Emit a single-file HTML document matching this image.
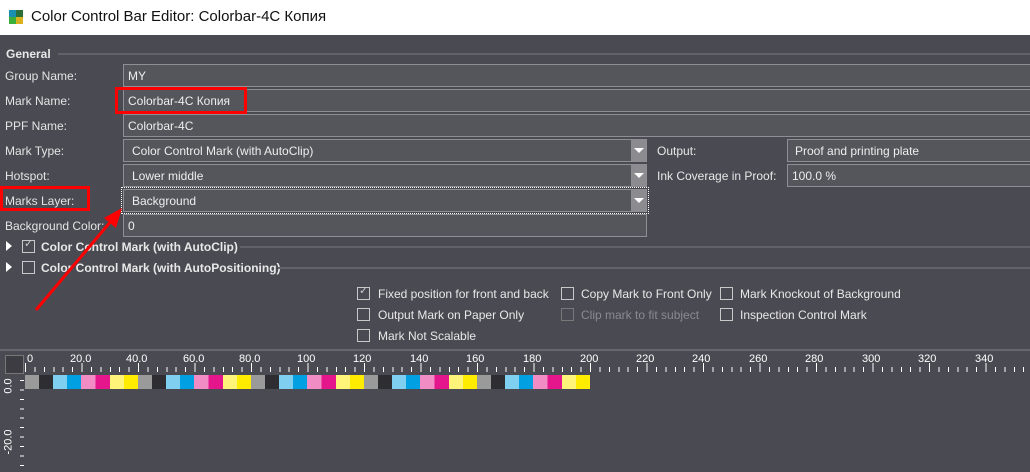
<!DOCTYPE html>
<html><head><meta charset="utf-8"><style>
*{margin:0;padding:0;box-sizing:border-box}
body{width:1030px;height:472px;overflow:hidden;background:#4a4a52;font-family:"Liberation Sans",Arial,sans-serif;font-size:12px;color:#e8e8e8;position:relative}
.a{position:absolute;white-space:nowrap}
.title{left:0;top:0;width:1030px;height:35px;background:#fff;color:#111;font-size:15px}
.f{position:absolute;height:23px;background:#55555c;border:1px solid #8e8e94;padding:4px 0 0 4px;color:#eee}
.dd{position:absolute;right:0;top:0;width:15px;height:21px;background:#8b8b90}
.dd:after{content:"";position:absolute;left:3px;top:8px;border-left:5px solid transparent;border-right:5px solid transparent;border-top:5px solid #fff}
.lbl{position:absolute;left:5px;color:#e4e4e4}
.cb{position:absolute;width:13px;height:13px;border:1px solid #c8c8c8}
.line{position:absolute;height:2px;background:#62626a}
.red{position:absolute;border:3px solid #f00}
</style></head><body>
<div class="a title">
 <svg class="a" style="left:8px;top:9px" width="16" height="16"><rect x="1" y="1" width="7" height="7" fill="#1a8fb0"/><rect x="8" y="1" width="7" height="7" fill="#2a6e3a"/><rect x="1" y="8" width="7" height="7" fill="#3cae3c"/><rect x="8" y="8" width="7" height="7" fill="#d8b020"/></svg>
 <span class="a" style="left:31px;top:8px">Color Control Bar Editor: Colorbar-4C Копия</span>
</div>
<span class="a" style="left:6px;top:47px;font-weight:bold">General</span>
<div class="line" style="left:58px;top:53px;width:972px"></div>
<span class="lbl" style="top:69px">Group Name:</span>
<div class="f" style="left:123px;top:64px;width:920px">MY</div>
<span class="lbl" style="top:94px">Mark Name:</span>
<div class="f" style="left:123px;top:89px;width:920px">Colorbar-4C Копия</div>
<span class="lbl" style="top:119px">PPF Name:</span>
<div class="f" style="left:123px;top:114px;width:920px">Colorbar-4C</div>
<span class="lbl" style="top:144px">Mark Type:</span>
<div class="f" style="left:123px;top:139px;width:524px;padding-left:8px">Color Control Mark (with AutoClip)<div class="dd"></div></div>
<span class="lbl" style="top:169px">Hotspot:</span>
<div class="f" style="left:123px;top:164px;width:524px;padding-left:8px">Lower middle<div class="dd"></div></div>
<span class="lbl" style="top:194px">Marks Layer:</span>
<div class="f" style="left:123px;top:189px;width:524px;padding-left:8px;outline:1px dotted #fff;outline-offset:1px">Background<div class="dd"></div></div>
<span class="lbl" style="top:219px">Background Color:</span>
<div class="f" style="left:123px;top:214px;width:524px">0</div>
<span class="a" style="left:657px;top:144px">Output:</span>
<div class="f" style="left:787px;top:139px;width:260px;padding-left:7px">Proof and printing plate</div>
<span class="a" style="left:657px;top:169px">Ink Coverage in Proof:</span>
<div class="f" style="left:787px;top:164px;width:260px">100.0 %</div>

<div class="a" style="left:6px;top:241px;border-top:5px solid transparent;border-bottom:5px solid transparent;border-left:6px solid #fff"></div>
<div class="cb" style="left:22px;top:240px"></div><span class="a" style="left:24px;top:237px;color:#ccc;font-size:11px">✓</span>
<span class="a" style="left:41px;top:240px;font-weight:bold">Color Control Mark (with AutoClip)</span>
<div class="line" style="left:240px;top:246px;width:790px"></div>
<div class="a" style="left:6px;top:262px;border-top:5px solid transparent;border-bottom:5px solid transparent;border-left:6px solid #fff"></div>
<div class="cb" style="left:22px;top:261px"></div>
<span class="a" style="left:41px;top:261px;font-weight:bold">Color Control Mark (with AutoPositioning)</span>
<div class="line" style="left:278px;top:267px;width:752px"></div>

<div class="cb" style="left:357px;top:287px"></div><span class="a" style="left:359px;top:284px;color:#ccc;font-size:11px">✓</span>
<span class="a" style="left:378px;top:287px">Fixed position for front and back</span>
<div class="cb" style="left:561px;top:287px"></div><span class="a" style="left:581px;top:287px">Copy Mark to Front Only</span>
<div class="cb" style="left:720px;top:287px"></div><span class="a" style="left:740px;top:287px">Mark Knockout of Background</span>
<div class="cb" style="left:357px;top:308px"></div><span class="a" style="left:378px;top:308px">Output Mark on Paper Only</span>
<div class="cb" style="left:561px;top:308px;border-color:#777"></div><span class="a" style="left:581px;top:308px;color:#8a8a90">Clip mark to fit subject</span>
<div class="cb" style="left:720px;top:308px"></div><span class="a" style="left:740px;top:308px">Inspection Control Mark</span>
<div class="cb" style="left:357px;top:329px"></div><span class="a" style="left:378px;top:329px">Mark Not Scalable</span>

<div class="line" style="left:0;top:349px;width:1030px;height:2px;background:#66666e"></div>
<div class="a" style="left:5px;top:355px;width:19px;height:19px;border:1px solid #777;background:#3c3c42"></div>
<div class="a" style="left:25px;top:367px;width:1005px;height:5px;background:repeating-linear-gradient(90deg,#fff 0 1px,transparent 1px 9.4167px)"></div>
<div class="a" style="left:25px;top:363px;width:1005px;height:9px;background:repeating-linear-gradient(90deg,#fff 0 1px,transparent 1px 56.5px)"></div>
<div class="a" style="left:20px;top:380px;width:4px;height:92px;background:repeating-linear-gradient(180deg,#fff 0 1px,transparent 1px 9.4167px)"></div>
<div style="font-size:11px;color:#fff">
<span class="a" style="left:27px;top:353px">0</span>
<span class="a" style="left:70px;top:353px">20.0</span><span class="a" style="left:126px;top:353px">40.0</span><span class="a" style="left:183px;top:353px">60.0</span><span class="a" style="left:239px;top:353px">80.0</span>
<span class="a" style="left:297px;top:353px">100</span><span class="a" style="left:353px;top:353px">120</span><span class="a" style="left:410px;top:353px">140</span><span class="a" style="left:466px;top:353px">160</span><span class="a" style="left:523px;top:353px">180</span><span class="a" style="left:580px;top:353px">200</span><span class="a" style="left:636px;top:353px">220</span><span class="a" style="left:692px;top:353px">240</span><span class="a" style="left:749px;top:353px">260</span><span class="a" style="left:805px;top:353px">280</span><span class="a" style="left:862px;top:353px">300</span><span class="a" style="left:918px;top:353px">320</span><span class="a" style="left:975px;top:353px">340</span>
<span class="a" style="left:1px;top:380px;transform:rotate(-90deg)">0.0</span>
<span class="a" style="left:-4px;top:436px;transform:rotate(-90deg)">-20.0</span>
</div>
<div class="a" style="left:25px;top:375px;width:565px;height:14px;background:repeating-linear-gradient(90deg,#9a9a9a 0 14px,#2e2e32 14px 28px,#7fd0f0 28px 42px,#00a0e3 42px 56px,#f28cc4 56px 70.5px,#e5168c 70.5px 85px,#fff47a 85px 99px,#ffec00 99px 113px)"></div>

<div class="red" style="left:115px;top:87px;width:132px;height:27px"></div>
<div class="red" style="left:0;top:186px;width:90px;height:25px"></div>
<svg class="a" style="left:0;top:0" width="200" height="330"><line x1="36" y1="310" x2="112" y2="220" stroke="#f00" stroke-width="3"/><polygon points="122,208 104,218 116,228" fill="#f00"/></svg>
</body></html>
